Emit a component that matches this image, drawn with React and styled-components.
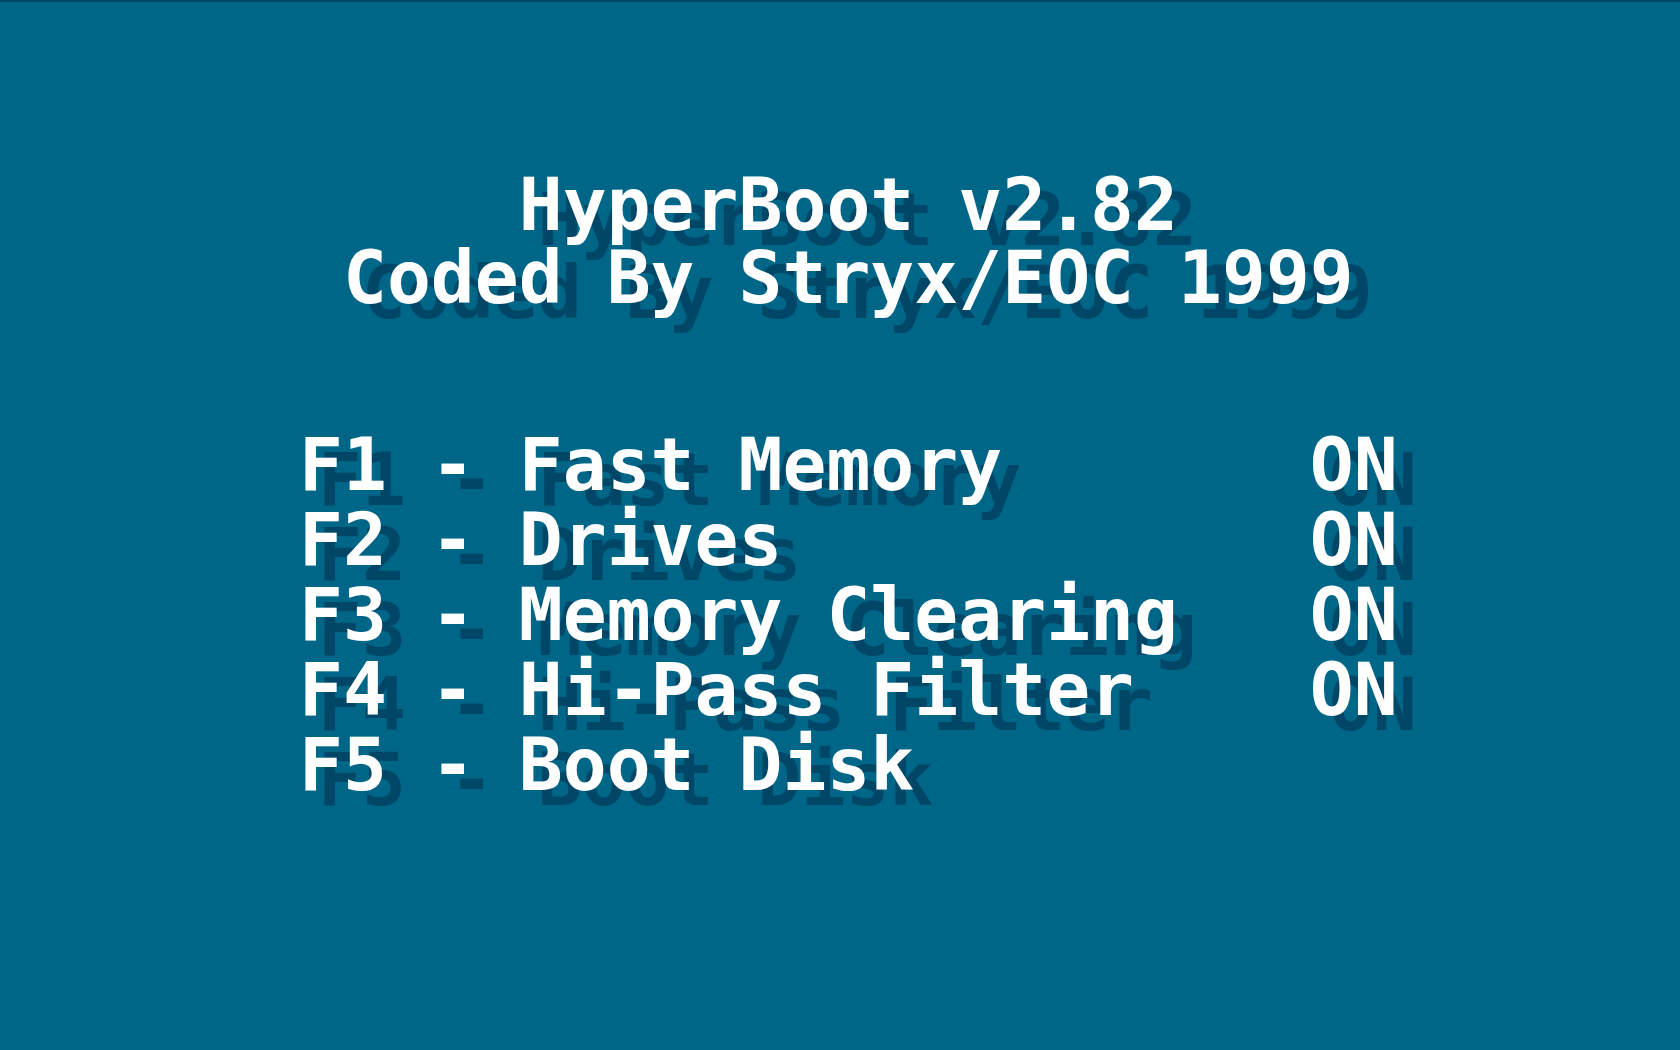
import styled, { createGlobalStyle } from 'styled-components';

const GlobalStyle = createGlobalStyle`
  html, body {
    margin: 0;
    padding: 0;
    background: #006688;
  }
  #root {
    min-height: 100vh;
  }
`;

const menu = [
  { key: 'F1', label: 'Fast Memory', status: 'ON' },
  { key: 'F2', label: 'Drives', status: 'ON' },
  { key: 'F3', label: 'Memory Clearing', status: 'ON' },
  { key: 'F4', label: 'Hi-Pass Filter', status: 'ON' },
  { key: 'F5', label: 'Boot Disk', status: '' },
];

const App = () => {
  return (
    <>
      <GlobalStyle />
      <Screen>
        <Block>
          <Title>
            <TitleLine>HyperBoot v2.82</TitleLine>
            <TitleLine>Coded By Stryx/EOC 1999</TitleLine>
          </Title>
          <Menu>
            {menu.map((item) => (
              <Row key={item.key}>
                <Label>{`${item.key} - ${item.label}`}</Label>
                <Status>{item.status}</Status>
              </Row>
            ))}
          </Menu>
        </Block>
      </Screen>
    </>
  );
};

export default App;

const Screen = styled.div`
  box-sizing: border-box;
  width: 100%;
  height: 100vh;
  background: #006688;
  border-top: 2px solid #004a68;
  padding: 166px 0 0 299px;
  overflow: hidden;
`;

const Block = styled.div`
  width: 25ch;
  font-family: 'DejaVu Sans Mono', 'Liberation Mono', monospace;
  font-weight: bold;
  font-size: 73px;
  color: #ffffff;
  text-shadow: 19px 15px 0 #004667;
  white-space: pre;
`;

const Title = styled.div`
  display: flex;
  flex-direction: column;
  align-items: center;
  margin-bottom: 113px;
`;

const TitleLine = styled.div`
  line-height: 73px;
`;

const Menu = styled.div`
  display: flex;
  flex-direction: column;
`;

const Row = styled.div`
  display: grid;
  grid-template-columns: 23ch 2ch;
  line-height: 75px;
`;

const Label = styled.span``;

const Status = styled.span``;
